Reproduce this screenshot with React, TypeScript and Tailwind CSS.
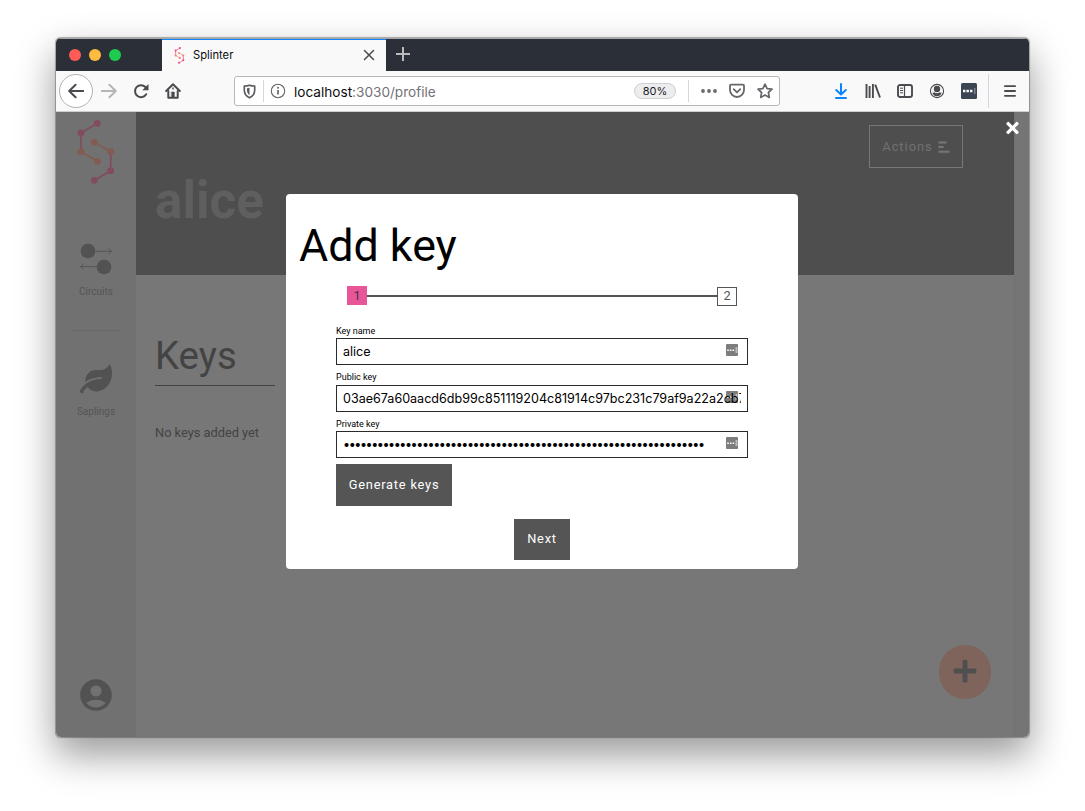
import type { ReactNode } from "react";
import { FaLeaf, FaPlus, FaTimes } from "react-icons/fa";
import { MdAccountCircle } from "react-icons/md";

type LogoProps = { className: string; top: string; mid: string; r?: number; stroke?: number };

function SplinterLogo({ className, top, mid, r = 3.4, stroke = 1.7 }: LogoProps) {
  return (
    <svg viewBox="0 0 38 66" className={className} fill="none" strokeWidth={stroke}>
      <path d="M20.3 4.3 4 14v18.7" stroke={top} />
      <path d="m4 32.7 16.3 9.6M17.3 23.3l16.4 9.4" stroke={mid} />
      <path d="M33.7 32.7v19l-16.4 9.6" stroke={top} />
      <g fill={top}>
        <circle cx="20.3" cy="4.3" r={r} />
        <circle cx="4" cy="14" r={r} />
        <circle cx="33.7" cy="51.7" r={r} />
        <circle cx="17.3" cy="61.3" r={r} />
      </g>
      <g fill={mid}>
        <circle cx="4" cy="32.7" r={r} />
        <circle cx="20.3" cy="42.3" r={r} />
        <circle cx="17.3" cy="23.3" r={r} />
        <circle cx="33.7" cy="32.7" r={r} />
      </g>
    </svg>
  );
}

function Cell({ children }: { children: ReactNode }) {
  return <div className="flex h-8 w-8 shrink-0 items-center justify-center">{children}</div>;
}

function TabBar() {
  return (
    <div className="flex h-[33px] border-t border-[#a3a5a8] bg-[#2b2f37]">
      <div className="flex w-[106px] items-center gap-2 pl-[13px]">
        <span className="h-3 w-3 rounded-full bg-[#ff5b56]" />
        <span className="h-3 w-3 rounded-full bg-[#fdbb40]" />
        <span className="h-3 w-3 rounded-full bg-[#1dcb4f]" />
      </div>
      <div className="flex w-[224px] items-center border-t border-[#0a84ff] bg-[#f9f9fa] pl-3 pr-[11px]">
        <SplinterLogo className="h-[17px] w-[11px]" top="#e8487c" mid="#f0806f" r={4} stroke={2.6} />
        <span className="ml-2 flex-1 text-[11.2px] text-[#0c0c0d]">Splinter</span>
        <svg viewBox="0 0 12 12" className="mb-px h-3 w-3" stroke="#4a4a4f" strokeWidth="1.5" strokeLinecap="round">
          <path d="m1.5 1.5 9 9m0-9-9 9" />
        </svg>
      </div>
      <div className="flex w-[34px] items-center justify-center pb-[2px]">
        <svg viewBox="0 0 14 14" className="h-[14px] w-[14px]" stroke="#b9bbbe" strokeWidth="2">
          <path d="M7 0v14M0 7h14" />
        </svg>
      </div>
    </div>
  );
}

function Toolbar() {
  return (
    <div className="flex h-[41px] items-center border-b border-[#cfcfd0] bg-[#f9f9fa] pl-[3px] text-[#4a4a4f]">
      <div className="flex h-[34px] w-[34px] shrink-0 items-center justify-center rounded-full border border-[#b1b1b3] bg-white">
        <svg viewBox="0 0 16 16" className="h-4 w-4" fill="none" stroke="currentColor" strokeWidth="2" strokeLinecap="round" strokeLinejoin="round">
          <path d="M15.3 8H1.5M7.6 1.7 1.2 8l6.4 6.3" />
        </svg>
      </div>
      <Cell>
        <svg viewBox="0 0 16 16" className="h-4 w-4 text-[#b5b5b7]" fill="none" stroke="currentColor" strokeWidth="1.9" strokeLinecap="round" strokeLinejoin="round">
          <path d="M.7 8h13.8M8.4 1.7 14.8 8l-6.4 6.3" />
        </svg>
      </Cell>
      <Cell>
        <svg viewBox="0 0 16 16" className="h-4 w-4" fill="none" stroke="currentColor" strokeWidth="2">
          <path d="M13.2 11.2A6 6 0 1 1 12.4 4" strokeLinecap="round" />
          <path d="M15.5 1v6.2H9.3z" fill="currentColor" stroke="none" />
        </svg>
      </Cell>
      <Cell>
        <svg viewBox="0 0 16 16" className="h-4 w-4" fill="none" stroke="currentColor" strokeWidth="2" strokeLinejoin="round" strokeLinecap="round">
          <path d="M1.2 8 8 1.3 14.8 8" />
          <path d="M3.3 8v6.7h9.4V8" />
          <path d="M6.7 9h2.6v5.5H6.7z" fill="currentColor" strokeWidth=".6" />
          <path d="M8 5v1" strokeWidth="1.4" />
        </svg>
      </Cell>
      <div className="ml-[45px] flex h-[30px] w-[546px] shrink-0 items-center rounded-[3px] border border-[#b8b8ba] bg-white pr-[6px]">
        <svg viewBox="0 0 14 16" className="ml-2 h-[15px] w-[13px] shrink-0 text-[#5b5b60]" fill="none" stroke="currentColor" strokeWidth="1.8" strokeLinejoin="round">
          <path d="M7 1.2c1.7.6 3.7.9 5.6.9v4.2c0 4-2 6.8-5.6 8.4C3.4 13.1 1.4 10.3 1.4 6.3V2.1C3.3 2.1 5.3 1.8 7 1.2z" />
          <path d="M7 4v8c-1.7-1.2-2.7-3-2.7-5.6V4.4C5.2 4.4 6.2 4.2 7 4z" fill="currentColor" stroke="none" />
        </svg>
        <span className="ml-[7px] h-[22px] w-px bg-[#d7d7db]" />
        <svg viewBox="0 0 16 16" className="ml-[6px] h-4 w-4 text-[#66666b]" fill="none" stroke="currentColor" strokeWidth="1.1">
          <circle cx="8" cy="8" r="6.7" />
          <path d="M8 7v4.5" strokeWidth="1.7" />
          <circle cx="8" cy="4.7" r="1" fill="currentColor" stroke="none" />
        </svg>
        <span className="ml-2 flex-1 pt-[2px] text-[13.6px] text-[#0c0c0d]">
          localhost<span className="text-[#737377]">:3030/profile</span>
        </span>
        <span className="flex h-4 w-[42px] items-center justify-center rounded-full border border-[#cfcfd1] bg-[#ededf0] text-[11px] text-[#1c1c1d]">
          80%
        </span>
        <span className="ml-3 h-[22px] w-px bg-[#d7d7db]" />
        <svg viewBox="0 0 16 4" className="ml-3 h-1 w-4" fill="#6a6a6e">
          <circle cx="2" cy="2" r="1.9" />
          <circle cx="8" cy="2" r="1.9" />
          <circle cx="14" cy="2" r="1.9" />
        </svg>
        <svg viewBox="0 0 16 16" className="ml-3 h-4 w-4 text-[#66666b]" fill="none" stroke="currentColor" strokeWidth="1.8" strokeLinecap="round" strokeLinejoin="round">
          <path d="M2 1.7h12q1 0 1 1V7A7 7 0 0 1 1 7V2.7q0-1 1-1z" />
          <path d="m4.7 6.2 3.3 3.2 3.3-3.2" />
        </svg>
        <svg viewBox="0 0 16 16" className="ml-3 h-4 w-4 text-[#66666b]" fill="none" stroke="currentColor" strokeWidth="1.7" strokeLinejoin="round">
          <path d="m8 1.2 2.1 4.4 4.9.6-3.6 3.3.9 4.9L8 12.1l-4.3 2.3.9-4.9L1 6.2l4.9-.6z" />
        </svg>
      </div>
      <div className="ml-[45px] flex shrink-0">
        <Cell>
          <svg viewBox="0 0 12 16" className="h-4 w-3 text-[#0a84ff]" fill="none" stroke="currentColor" strokeWidth="2" strokeLinecap="round" strokeLinejoin="round">
            <path d="M6 1v10M1.2 7 6 11.5 10.8 7M1 15h10" />
          </svg>
        </Cell>
        <Cell>
          <svg viewBox="0 0 16 16" className="h-4 w-4" fill="none" stroke="currentColor" strokeWidth="1.9">
            <path d="M1.5 1v14M4.6 3v12M7.9 1v14M10.2 1.6 15 14.5" />
          </svg>
        </Cell>
        <Cell>
          <svg viewBox="0 0 16 14" className="h-[14px] w-4" fill="none" stroke="currentColor" strokeWidth="1.9">
            <rect x="1" y="1" width="14" height="12" rx="2" />
            <path d="M7.5 1.5v11" strokeWidth="1.2" />
            <path d="M3 4.2h3M3 6.5h3M3 8.8h3" strokeWidth="1" />
          </svg>
        </Cell>
        <Cell>
          <svg viewBox="0 0 16 16" className="h-4 w-4" fill="currentColor">
            <circle cx="8" cy="8" r="6.6" fill="none" stroke="currentColor" strokeWidth="1.1" />
            <circle cx="8" cy="6" r="3.2" />
            <path d="M3.3 9.7q2-.3 2.5-.1 2.2 1.5 4.4 0 .5-.2 2.5.1-1.3 3.5-4.7 3.5t-4.7-3.5z" />
          </svg>
        </Cell>
        <Cell>
          <svg viewBox="0 0 16 16" className="h-4 w-4">
            <rect width="16" height="16" rx="1.5" fill="#3b4652" />
            <path d="M2 6.8h2.4v2.4H2zM5.5 6.8h2.4v2.4H5.5zM9 6.8h2.4v2.4H9z" fill="#fff" />
            <path d="M13.8 5v6" stroke="#9aa2aa" />
          </svg>
        </Cell>
      </div>
      <span className="ml-[3px] h-[34px] w-px bg-[#d7d7db]" />
      <div className="ml-[5px]">
        <Cell>
          <svg viewBox="0 0 12 12" className="h-3 w-3" stroke="currentColor" strokeWidth="1.8" strokeLinecap="round">
            <path d="M.9 1.2h10.2M.9 6h10.2M.9 10.8h10.2" />
          </svg>
        </Cell>
      </div>
    </div>
  );
}

function Sidebar() {
  return (
    <aside className="flex w-20 shrink-0 flex-col items-center bg-[#717171] font-[Roboto,sans-serif] text-[10px] leading-3 text-[#555]">
      <SplinterLogo className="mt-[7px] h-[66px] w-[38px]" top="#824c60" mid="#845b53" />
      <svg viewBox="0 0 34 32" className="mt-[58px] h-8 w-[34px]" fill="none" stroke="#525252">
        <circle cx="9" cy="8" r="7.3" fill="#525252" stroke="none" />
        <circle cx="25" cy="24" r="7.3" fill="#525252" stroke="none" />
        <path d="M16 8.3h16.5M29.5 5.7l3 2.6-3 2.6M18 23.6H1.5m3-2.6-3 2.6 3 2.6" strokeWidth=".9" />
      </svg>
      <span className="mt-[11px]">Circuits</span>
      <span className="mt-[32px] h-px w-12 bg-[#686868]" />
      <FaLeaf className="mt-[32px] h-[32px] w-[32px] text-[#525252]" />
      <span className="mt-[11px]">Saplings</span>
      <MdAccountCircle className="mb-[23px] mt-auto h-[38px] w-[38px] text-[#525252]" />
    </aside>
  );
}

function ProfilePage() {
  return (
    <main className="flex min-w-0 flex-1 flex-col bg-[#777] font-[Roboto,sans-serif]">
      <header className="flex h-[163px] justify-between bg-[#4e4e4e] pl-[19px] pr-[51px]">
        <h1 className="mt-[59px] text-[51.2px] font-bold leading-[60px] text-[#5f5f5f]">alice</h1>
        <button className="mt-[13px] flex h-[43px] w-[94px] items-center justify-center gap-[5px] border border-[#777] text-[12.8px] tracking-[1px] text-[#717171]">
          Actions
          <svg viewBox="0 0 12 12" className="h-3 w-3" stroke="#777" strokeWidth="2">
            <path d="M.5 1.5h8M.5 6h5M.5 10.7h11" />
          </svg>
        </button>
      </header>
      <section className="flex flex-1 flex-col items-start pl-[19px] pt-[56px] text-[#434343]">
        <h2 className="h-[55px] w-[120px] border-b border-[#434343] text-[38.4px] leading-[50px]">Keys</h2>
        <p className="mt-[39px] text-[12.8px] leading-4">No keys added yet</p>
        <button className="mb-[38px] ml-auto mr-[23px] mt-auto flex h-[54px] w-[52px] items-center justify-center rounded-full bg-[#7e645b] pb-[2px]">
          <FaPlus className="h-[26px] w-[26px] text-[#4f4f4f]" />
        </button>
      </section>
    </main>
  );
}

type FieldProps = { label: string; value: string; className: string; labelClass: string; input: string };

function Field({ label, value, className, labelClass, input }: FieldProps) {
  return (
    <label className={className}>
      <span className={labelClass}>{label}</span>
      <span className="relative mt-[2px] flex h-[27px] items-center border border-[#2b2b2b] bg-white px-[6px]">
        <svg viewBox="0 0 12 12" className="absolute right-[9px] top-[5px] h-3 w-3">
          <rect width="12" height="12" rx="1" fill="#7d7d7d" />
          <path d="M1.2 5.5h1.6v1.4H1.2zM3.9 5.5h1.6v1.4H3.9zM6.6 5.5h1.6v1.4H6.6z" fill="#fff" />
          <path d="M10.5 3v6" stroke="#bdbdbd" strokeWidth="2" />
        </svg>
        <span className={input}>{value}</span>
      </span>
    </label>
  );
}

const labelLow = "block h-[11px] pt-px text-[9px] leading-[11px] text-black";
const labelHigh = "block h-[11px] text-[9px] leading-[11px] text-black";
const textInput =
  "relative block flex-1 overflow-hidden whitespace-nowrap font-[Inter,sans-serif] text-[12.55px] leading-[20px] text-black";
const passwordInput =
  "relative block flex-1 overflow-hidden whitespace-nowrap font-[Inter,sans-serif] text-[12.6px] leading-[20px] tracking-[-1.45px] text-black";

function AddKeyModal() {
  return (
    <div className="absolute inset-0 flex items-start pl-[230px] pt-[82px] font-[Roboto,sans-serif]">
      <button className="absolute right-[9px] top-[7px] text-white" aria-label="Close">
        <FaTimes className="h-[18px] w-[15px]" />
      </button>
      <form className="flex h-[375px] w-[512px] flex-col rounded-[4px] bg-white">
        <h2 className="ml-[13px] mt-[22px] text-[44.8px] leading-[60px] text-black">Add key</h2>
        <div className="ml-[61px] mt-[10px] flex h-5 w-[390px] items-center text-[12.8px] text-[#555]">
          <span className="mb-px flex h-[19px] w-5 items-center justify-center bg-[#e8569a] text-[#4a3040]">1</span>
          <span className="h-[2px] flex-1 bg-[#555]" />
          <span className="mt-px flex h-[19px] w-5 items-center justify-center border border-[#555] bg-white pb-px">2</span>
        </div>
        <div className="ml-[50px] mt-[19px] flex w-[412px] flex-col items-stretch">
          <Field label="Key name" value="alice" className="block h-[47px]" labelClass={labelLow} input={textInput} />
          <Field
            label="Public key"
            value="03ae67a60aacd6db99c851119204c81914c97bc231c79af9a22a2cb7"
            className="block h-[46px]"
            labelClass={labelHigh}
            input={textInput}
          />
          <Field
            label="Private key"
            value={"•".repeat(64)}
            className="block h-[40px]"
            labelClass={labelLow}
            input={passwordInput}
          />
          <button type="button" className="mt-[6px] h-[42px] w-[116px] bg-[#555] text-[12.8px] tracking-[0.8px] text-white">
            Generate keys
          </button>
        </div>
        <button type="button" className="ml-[228px] mt-[13px] h-[41px] w-14 bg-[#555] pb-[2px] text-[12.8px] tracking-[0.8px] text-white">
          Next
        </button>
      </form>
    </div>
  );
}

export default function App() {
  return (
    <div className="flex h-[811px] w-[1085px] overflow-hidden bg-white pl-[56px] pt-[38px] font-[Inter,sans-serif]">
      <div className="flex h-[699px] w-[973px] flex-col overflow-hidden rounded-[5px] shadow-[0_0_1px_0.5px_rgba(0,0,0,0.3),0_17px_38px_1px_rgba(0,0,0,0.4)]">
        <TabBar />
        <Toolbar />
        <div className="relative flex flex-1">
          <Sidebar />
          <ProfilePage />
          <div className="w-[15px] shrink-0 border-l border-[#717171] bg-[#757575]" />
          <AddKeyModal />
        </div>
      </div>
    </div>
  );
}
